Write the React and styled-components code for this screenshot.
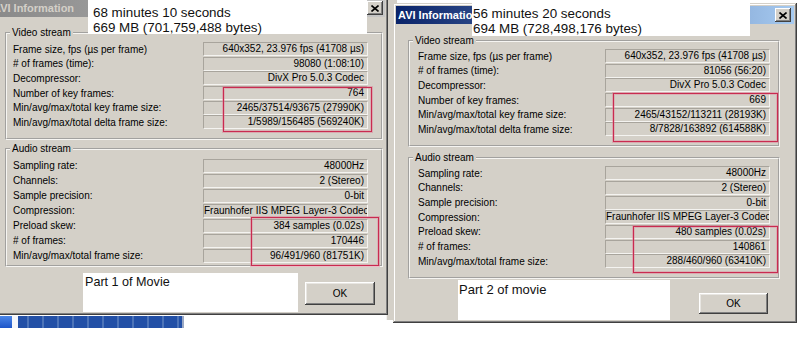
import styled, { createGlobalStyle } from "styled-components";

const GlobalStyle = createGlobalStyle`
  html, body {
    margin: 0;
    padding: 0;
    background: #fff;
  }
`;

const leftInfo = {
  video: [
    ["Frame size, fps (µs per frame)", "640x352, 23.976 fps (41708 µs)"],
    ["# of frames (time):", "98080 (1:08:10)"],
    ["Decompressor:", "DivX Pro 5.0.3 Codec"],
    ["Number of key frames:", "764"],
    ["Min/avg/max/total key frame size:", "2465/37514/93675 (27990K)"],
    ["Min/avg/max/total delta frame size:", "1/5989/156485 (569240K)"],
  ],
  audio: [
    ["Sampling rate:", "48000Hz"],
    ["Channels:", "2 (Stereo)"],
    ["Sample precision:", "0-bit"],
    ["Compression:", "Fraunhofer IIS MPEG Layer-3 Codec"],
    ["Preload skew:", "384 samples (0.02s)"],
    ["# of frames:", "170446"],
    ["Min/avg/max/total frame size:", "96/491/960 (81751K)"],
  ],
};

const rightInfo = {
  video: [
    ["Frame size, fps (µs per frame)", "640x352, 23.976 fps (41708 µs)"],
    ["# of frames (time):", "81056 (56:20)"],
    ["Decompressor:", "DivX Pro 5.0.3 Codec"],
    ["Number of key frames:", "669"],
    ["Min/avg/max/total key frame size:", "2465/43152/113211 (28193K)"],
    ["Min/avg/max/total delta frame size:", "8/7828/163892 (614588K)"],
  ],
  audio: [
    ["Sampling rate:", "48000Hz"],
    ["Channels:", "2 (Stereo)"],
    ["Sample precision:", "0-bit"],
    ["Compression:", "Fraunhofer IIS MPEG Layer-3 Codec"],
    ["Preload skew:", "480 samples (0.02s)"],
    ["# of frames:", "140861"],
    ["Min/avg/max/total frame size:", "288/460/960 (63410K)"],
  ],
};

const windows = [
  {
    id: "left",
    active: false,
    x: -3, y: -4, w: 391, h: 319,
    titleShift: -9, titleRight: 2,
    padTop: 10, padL: 5, padR: 2,
    videoPt: 3, videoPb: 8, videoRow: 14.6,
    gap: 3.4,
    audioPt: 3.5, audioPb: 2, audioRow: 15,
    labelL: 6, valueR: 13,
    okTop: 11.5, okRight: 8, okW: 70, okH: 23,
    data: leftInfo,
  },
  {
    id: "right",
    active: true,
    x: 393, y: 3, w: 404, h: 320,
    titleShift: 0, titleRight: 3,
    padTop: 11, padL: 12, padR: 14,
    videoPt: 2, videoPb: 8, videoRow: 14.6,
    gap: 5.4,
    audioPt: 2, audioPb: 8, audioRow: 14.67,
    labelL: 8, valueR: 8,
    okTop: 9.3, okRight: 12, okW: 69, okH: 21,
    data: rightInfo,
  },
];

const notes = [
  { x: 88, y: 0, w: 279, h: 34, size: 13.4, lh: 15, pad: "4.5px 5px", lines: ["68 minutes 10 seconds", "669 MB (701,759,488 bytes)"] },
  { x: 472, y: 0, w: 278, h: 36, size: 13.4, lh: 15, pad: "5.5px 1px", lines: ["56 minutes 20 seconds", "694 MB (728,498,176 bytes)"] },
  { x: 83, y: 273, w: 215, h: 39, size: 12.6, lh: 17, pad: "1px 2px", lines: ["Part 1 of Movie"] },
  { x: 458, y: 280, w: 212, h: 40, size: 13, lh: 17, pad: "1px 1px", lines: ["Part 2 of movie"] },
];

const marks = [
  { x: 223, y: 87, w: 149, h: 45 },
  { x: 251, y: 217, w: 128, h: 49 },
  { x: 613, y: 93, w: 165, h: 49 },
  { x: 633, y: 226, w: 145, h: 47 },
];

export default function App() {
  return (
    <Desktop>
      <GlobalStyle />
      <BackPane />
      <TaskStrip>
        <TaskIcon />
        <TaskGap />
        <TaskTitle />
      </TaskStrip>
      {windows.map((win) => (
        <InfoWindow key={win.id} win={win} />
      ))}
      {notes.map((n, i) => (
        <Note key={i} $x={n.x} $y={n.y} $w={n.w} $h={n.h} $size={n.size} $lh={n.lh} $pad={n.pad}>
          {n.lines.map((l) => (
            <div key={l}>{l}</div>
          ))}
        </Note>
      ))}
      {marks.map((m, i) => (
        <Mark key={i} $x={m.x} $y={m.y} $w={m.w} $h={m.h} />
      ))}
    </Desktop>
  );
}

function InfoWindow({ win }) {
  return (
    <Win $x={win.x} $y={win.y} $w={win.w} $h={win.h}>
      <TitleBar $active={win.active} $right={win.titleRight}>
        <TitleText $shift={win.titleShift}>AVI Information</TitleText>
        <CloseButton>
          <svg width="8" height="7" viewBox="0 0 8 7">
            <path d="M0.5 0.5 L7.5 6.5 M7.5 0.5 L0.5 6.5" stroke="#000" strokeWidth="1.6" />
          </svg>
        </CloseButton>
      </TitleBar>
      <Body $top={win.padTop} $l={win.padL} $r={win.padR} $gap={win.gap}>
        <Group $pt={win.videoPt} $pb={win.videoPb}>
          <Legend>Video stream</Legend>
          {win.data.video.map(([label, value]) => (
            <Row key={label} $h={win.videoRow} $l={win.labelL} $r={win.valueR}>
              <Label>{label}</Label>
              <Value $h={win.videoRow}>{value}</Value>
            </Row>
          ))}
        </Group>
        <Group $pt={win.audioPt} $pb={win.audioPb}>
          <Legend>Audio stream</Legend>
          {win.data.audio.map(([label, value]) => (
            <Row key={label} $h={win.audioRow} $l={win.labelL} $r={win.valueR}>
              <Label>{label}</Label>
              <Value $h={win.audioRow}>{value}</Value>
            </Row>
          ))}
        </Group>
        <Footer $top={win.okTop} $right={win.okRight}>
          <OkButton $w={win.okW} $h={win.okH}>OK</OkButton>
        </Footer>
      </Body>
    </Win>
  );
}

const Desktop = styled.div`
  position: relative;
  width: 800px;
  height: 348px;
  overflow: hidden;
  background: #fff;
  font-family: "Liberation Sans", Arial, sans-serif;
`;

/* a sliver of another window showing between the two dialogs */
const BackPane = styled.div`
  position: absolute;
  left: 386px;
  top: 0;
  width: 10px;
  height: 320px;
  background: #d4d0c8;
  border-left: 1px solid #f4f3f0;
`;

const TaskStrip = styled.div`
  position: absolute;
  left: 0;
  top: 316px;
  width: 184px;
  height: 12px;
  display: flex;
`;

const TaskIcon = styled.div`
  width: 12px;
  background: linear-gradient(180deg, #4a86e8, #1d55c8);
`;

const TaskGap = styled.div`
  width: 6px;
  background: #f4f6fb;
`;

const TaskTitle = styled.div`
  flex: 1;
  background: repeating-linear-gradient(90deg, #2350a6 0 9px, #4d74b8 9px 11px, #2350a6 11px 15px);
  border-right: 2px solid #9aa8c4;
`;

const Win = styled.section`
  position: absolute;
  left: ${(p) => p.$x}px;
  top: ${(p) => p.$y}px;
  width: ${(p) => p.$w}px;
  height: ${(p) => p.$h}px;
  box-sizing: border-box;
  padding: 3px;
  display: flex;
  flex-direction: column;
  background: #d4d0c8;
  box-shadow: inset -1px -1px #404040, inset 1px 1px #d4d0c8,
    inset -2px -2px #808080, inset 2px 2px #fff;
  font-size: 10px;
  color: #000;
`;

const TitleBar = styled.div`
  height: 18px;
  flex: none;
  display: flex;
  align-items: center;
  padding: 0 ${(p) => p.$right}px 0 2px;
  overflow: hidden;
  background: ${(p) =>
    p.$active
      ? "linear-gradient(90deg, #0a246a, #a6caf0)"
      : "linear-gradient(90deg, #8a8a8a, #c6c6c6)"};
  color: ${(p) => (p.$active ? "#fff" : "#d4d0c8")};
  font-weight: bold;
  font-size: 11px;
`;

const TitleText = styled.span`
  flex: 1;
  margin-left: ${(p) => p.$shift}px;
  white-space: nowrap;
`;

const CloseButton = styled.span`
  width: 16px;
  height: 14px;
  flex: none;
  display: flex;
  align-items: center;
  justify-content: center;
  box-sizing: border-box;
  background: #d4d0c8;
  box-shadow: inset -1px -1px #404040, inset 1px 1px #fff,
    inset -2px -2px #808080;
`;

const Body = styled.div`
  display: flex;
  flex-direction: column;
  gap: ${(p) => p.$gap}px;
  padding: ${(p) => p.$top}px ${(p) => p.$r}px 0 ${(p) => p.$l}px;
`;

const Group = styled.fieldset`
  margin: 0;
  min-width: 0;
  padding: ${(p) => p.$pt}px 0 ${(p) => p.$pb}px;
  border: 2px groove #f6f5f2;
`;

const Legend = styled.legend`
  margin-left: 3px;
  padding: 0 2px;
  font-size: 10px;
  line-height: 12px;
`;

const Row = styled.div`
  display: grid;
  grid-template-columns: 1fr 165px;
  align-items: center;
  height: ${(p) => p.$h}px;
  padding: 0 ${(p) => p.$r}px 0 ${(p) => p.$l}px;
`;

const Label = styled.span`
  white-space: nowrap;
  overflow: hidden;
`;

const Value = styled.span`
  box-sizing: border-box;
  height: ${(p) => p.$h - 0.6}px;
  line-height: ${(p) => p.$h - 2.6}px;
  padding-right: 3px;
  text-align: right;
  white-space: nowrap;
  overflow: hidden;
  border: 1px solid;
  border-color: #a8a49c #f4f3f0 #f4f3f0 #a8a49c;
`;

const Footer = styled.div`
  display: flex;
  justify-content: flex-end;
  padding: ${(p) => p.$top}px ${(p) => p.$right}px 0 0;
`;

const OkButton = styled.div`
  width: ${(p) => p.$w}px;
  height: ${(p) => p.$h}px;
  display: flex;
  align-items: center;
  justify-content: center;
  box-sizing: border-box;
  background: #d4d0c8;
  box-shadow: inset -1px -1px #404040, inset 1px 1px #fff,
    inset -2px -2px #808080, inset 2px 2px #e8e6e2;
  font-size: 10px;
`;

const Note = styled.div`
  position: absolute;
  left: ${(p) => p.$x}px;
  top: ${(p) => p.$y}px;
  width: ${(p) => p.$w}px;
  height: ${(p) => p.$h}px;
  box-sizing: border-box;
  padding: ${(p) => p.$pad};
  background: #fff;
  color: #111;
  font-size: ${(p) => p.$size}px;
  line-height: ${(p) => p.$lh}px;
  white-space: nowrap;
`;

const Mark = styled.div`
  position: absolute;
  left: ${(p) => p.$x}px;
  top: ${(p) => p.$y}px;
  width: ${(p) => p.$w}px;
  height: ${(p) => p.$h}px;
  box-sizing: border-box;
  border: 1px solid #c92b50;
  box-shadow: 0 0 0 1px rgba(225, 120, 145, 0.45),
    inset 0 0 0 1px rgba(225, 120, 145, 0.35);
  pointer-events: none;
`;
